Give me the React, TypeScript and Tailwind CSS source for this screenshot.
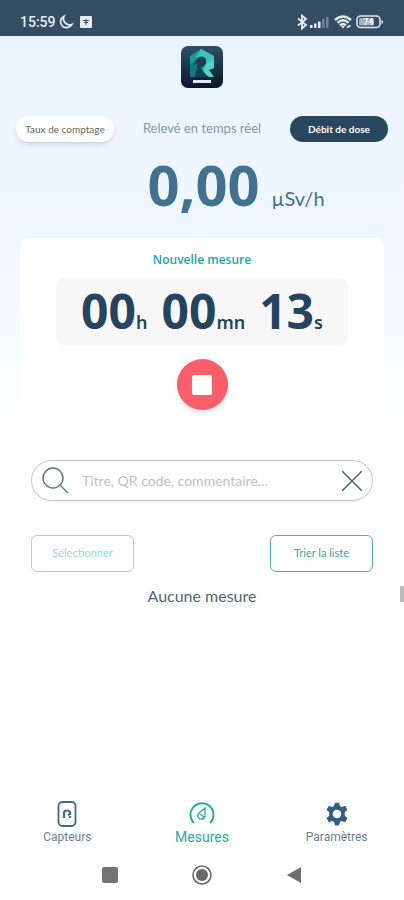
import { useState } from 'react';

interface TimePartProps {
  value: string;
  unit: string;
}

interface TabProps {
  label: string;
  active?: boolean;
  children: React.ReactNode;
}

function StatusBar() {
  return (
    <header className="flex h-9 items-end justify-between bg-[#344d65] px-5 pb-1.5 text-[#e4edf6]">
      <div className="flex items-center">
        <span className="font-[Roboto,sans-serif] text-sm leading-4 font-medium">15:59</span>
        <svg className="ml-0.5 h-4 w-4" viewBox="0 0 16 16" fill="none" stroke="currentColor" strokeWidth="1.8">
          <path d="M6 2.2A6 6 0 1 0 13.8 10.5A6.2 6.2 0 0 1 6 2.2Z" />
        </svg>
        <svg className="ml-1.5 h-3 w-3" viewBox="0 0 12 12">
          <rect width="12" height="12" rx="1" fill="currentColor" />
          <path d="M3 4.5h6M6 3v6M4 6.5h4" fill="none" stroke="#344d65" strokeWidth="1" />
        </svg>
      </div>
      <div className="flex items-center">
        <svg className="h-4 w-3" viewBox="0 0 12 16" fill="none" stroke="currentColor" strokeWidth="1.8">
          <path d="M2 4.5L10 11L6 14.5V1.5L10 5L2 11.5" />
        </svg>
        <svg className="mr-1 ml-0.5 h-4 w-5" viewBox="0 0 20 16" fill="currentColor">
          <rect x="0" y="11" width="2.5" height="3" />
          <rect x="4" y="9.5" width="2.5" height="4.5" />
          <rect x="8" y="7.5" width="2.5" height="6.5" />
          <rect x="12" y="5" width="2.5" height="9" opacity=".35" />
          <rect x="16" y="3" width="2.5" height="11" opacity=".35" />
        </svg>
        <svg className="mr-1 h-4 w-[18px]" viewBox="0 0 18 16" fill="none" stroke="currentColor" strokeWidth="2.4">
          <path d="M1 6Q9-1 17 6M3.5 8.8Q9 3.8 14.5 8.8M6 11.3Q9 8.6 12 11.3" />
          <path d="M7 12L9 14.5L11 12Z" fill="currentColor" stroke="none" />
          <path d="M13 13.5L16.5 11.5" strokeWidth="1.8" />
        </svg>
        <svg className="h-3.5 w-7" viewBox="0 0 28 14">
          <rect x="1" y="1" width="23" height="11.5" rx="3.5" fill="none" stroke="currentColor" strokeWidth="1.5" />
          <rect x="3" y="3" width="15" height="7.5" rx="1.5" fill="#a2b0bf" />
          <path d="M25.5 5v4l1.5-1V6Z" fill="currentColor" />
          <text x="12.5" y="10" fontSize="8.5" fontWeight="700" fontFamily="Roboto, sans-serif" textAnchor="middle" fill="#fff">74</text>
        </svg>
      </div>
    </header>
  );
}

function AppLogo() {
  return (
    <svg className="mx-auto h-[42px] w-[42px]" viewBox="0 0 42 42" role="img" aria-label="Logo">
      <defs>
        <linearGradient id="logo-bg" x1="0" y1="0" x2="0" y2="1">
          <stop offset="0" stopColor="#315063" />
          <stop offset="1" stopColor="#07172a" />
        </linearGradient>
      </defs>
      <rect width="42" height="42" rx="7" fill="url(#logo-bg)" />
      <path d="M9 10L20 3L33 10V22L27 24L32 31H10L9 30Z" fill="#1b9b9a" />
      <path d="M9 18L17 13V31H9Z" fill="#14777f" />
      <path d="M20 3L33 10V21L27 24L24 13L15 11Z" fill="#37c5bb" />
      <path d="M25 18L33 14V22L28 24L33 31H27L22 24Z" fill="#50d7ca" />
      <path d="M15 14Q18 9 23 11Q27 14 24 19L20 22Q22 27 28 31H14L17 17L13 19Z" fill="#173e50" />
      <rect x="12" y="34" width="18" height="3" fill="#e3e5f4" />
    </svg>
  );
}

function TimePart({ value, unit }: TimePartProps) {
  return (
    <span className="text-lg font-semibold">
      <span className="text-5xl font-bold">{value}</span>
      {unit}
    </span>
  );
}

function Tab({ label, active = false, children }: TabProps) {
  return (
    <button
      aria-current={active ? 'page' : undefined}
      className={`flex flex-col items-center font-[Roboto,sans-serif] leading-5 ${active ? 'text-sm text-[#29aaa9]' : 'text-xs text-[#667f90]'}`}
    >
      {children}
      <span>{label}</span>
    </button>
  );
}

export default function App() {
  const [query, setQuery] = useState('');

  return (
    <div className="flex min-h-screen flex-col bg-white font-[Lato,sans-serif]">
      <StatusBar />

      <main className="flex-1">
        <div className="bg-linear-to-b from-[#eaf4ff] via-[#f0f7ff] to-white px-4 pt-2.5">
          <AppLogo />

          {/* Live reading */}
          <div className="mt-7 grid grid-cols-[98px_1fr_98px] items-center text-center">
            <button className="h-[26px] rounded-full bg-white text-[10px] text-[#666] shadow-md">Taux de comptage</button>
            <h1 className="text-[13px] text-[#8799a4]">Relevé en temps réel</h1>
            <button className="h-[26px] rounded-full bg-[#29465f] text-[10px] font-bold text-white">Débit de dose</button>
          </div>
          <p className="mt-4 flex items-baseline justify-center gap-3 pl-[68px] text-[#42718f]">
            <span className="font-['Open_Sans',sans-serif] text-[56px] leading-[52px] font-bold">0,00</span>
            <span className="text-xl leading-6">µSv/h</span>
          </p>

          {/* New measurement */}
          <section className="mx-1 mt-7 rounded-lg bg-white px-9 pt-3 pb-6 text-center">
            <h2 className="font-['Open_Sans',sans-serif] text-xs leading-5 font-semibold text-[#19aaa9]">Nouvelle mesure</h2>
            <div className="mt-2 flex h-[67px] items-center justify-center gap-3.5 rounded-lg bg-[#f7f7f7] font-['Noto_Sans',sans-serif] text-[#24445f]">
              <TimePart value="00" unit="h" />
              <TimePart value="00" unit="mn" />
              <TimePart value="13" unit="s" />
            </div>
            <button aria-label="Arrêter" className="mx-auto mt-3.5 flex h-[51px] w-[51px] items-center justify-center rounded-full bg-[#fb5d69] shadow-md">
              <span className="h-5 w-5 rounded-xs bg-white" />
            </button>
          </section>
        </div>

        {/* Search and list */}
        <div className="px-[31px] pt-[26px]">
          <div className="flex h-[41px] items-center rounded-full border border-[#c4c8ca] px-2.5 shadow-xs">
            <svg className="h-7 w-7" viewBox="0 0 28 28" fill="none" stroke="#647b8b" strokeWidth="1.5">
              <circle cx="11" cy="11" r="10" />
              <path d="M18 18L26 26" />
            </svg>
            <input
              aria-label="Rechercher"
              placeholder="Titre, QR code, commentaire..."
              value={query}
              onChange={(e) => setQuery(e.target.value)}
              className="min-w-0 flex-1 px-3 text-sm text-[#42718f] outline-none placeholder:text-[#bfc1c3]"
            />
            <button aria-label="Effacer" onClick={() => setQuery('')}>
              <svg className="h-5 w-5" viewBox="0 0 20 20" fill="none" stroke="#45677d" strokeWidth="1.5">
                <path d="M0 0L20 20M20 0L0 20" />
              </svg>
            </button>
          </div>

          <div className="mt-[34px] flex justify-between">
            <button disabled className="h-[37px] w-[103px] rounded-md border border-[#9addd5] text-[11px] text-[#9addd5]">Sélectionner</button>
            <button className="h-[37px] w-[103px] rounded-md border border-[#4db5b1] text-[11px] text-[#36aaa9]">Trier la liste</button>
          </div>
        </div>
        <div className="relative mt-3">
          <p className="text-center text-base leading-6 text-[#4d697e]">Aucune mesure</p>
          <div className="absolute top-0.5 right-0 h-4 w-1 bg-[#bbb]" />
        </div>
      </main>

      <nav className="grid grid-cols-3 pb-2">
        <Tab label="Capteurs">
          <svg className="h-[26px] w-5" viewBox="0 0 20 26" fill="none" stroke="#3d6b8a">
            <rect x="1.5" y="1" width="17" height="24" rx="4" strokeWidth="1.8" />
            <path d="M7 17V12Q7 9.5 10 9.5Q13 9.5 13 12V13L11 14M13 15V17" strokeWidth="2.2" />
          </svg>
        </Tab>
        <Tab label="Mesures" active>
          <svg className="h-[26px] w-[26px]" viewBox="0 0 26 26" fill="none" stroke="currentColor">
            <path d="M5 22A11.5 11.5 0 1 1 21 22" strokeWidth="2" />
            <path d="M16 7L10 12Q7 16 11 18Q15 19 16 15ZM11 13L15 16" strokeWidth="1.3" />
          </svg>
        </Tab>
        <Tab label="Paramètres">
          <svg className="h-[26px] w-[26px]" viewBox="0 0 24 24" fill="#315f80" stroke="#315f80" strokeLinejoin="round">
            <path d="M10.5 2h3l.8 3 2 1.1 3-1 1.7 3-2.3 2v3.8l2.3 2-1.7 3-3-1-2 1.1-.8 3h-3l-.8-3-2-1.1-3 1-1.7-3 2.3-2v-3.8l-2.3-2 1.7-3 3 1 2-1.1Z" />
            <circle cx="12" cy="12" r="4" fill="#fff" stroke="none" />
          </svg>
        </Tab>
      </nav>

      <footer className="flex h-[45px] items-start justify-center gap-[74px] pt-2.5">
        <button aria-label="Applications récentes" className="flex h-5 w-4 items-center">
          <span className="h-4 w-4 rounded-xs bg-[#737373]" />
        </button>
        <button aria-label="Accueil">
          <svg className="h-5 w-5" viewBox="0 0 20 20" fill="#686868">
            <circle cx="10" cy="10" r="9" fill="none" stroke="#686868" strokeWidth="1.6" />
            <circle cx="10" cy="10" r="6" />
          </svg>
        </button>
        <button aria-label="Retour">
          <svg className="h-5 w-4" viewBox="0 0 16 20" fill="#6f6f6f">
            <path d="M1 10L15 2V18Z" />
          </svg>
        </button>
      </footer>
    </div>
  );
}
